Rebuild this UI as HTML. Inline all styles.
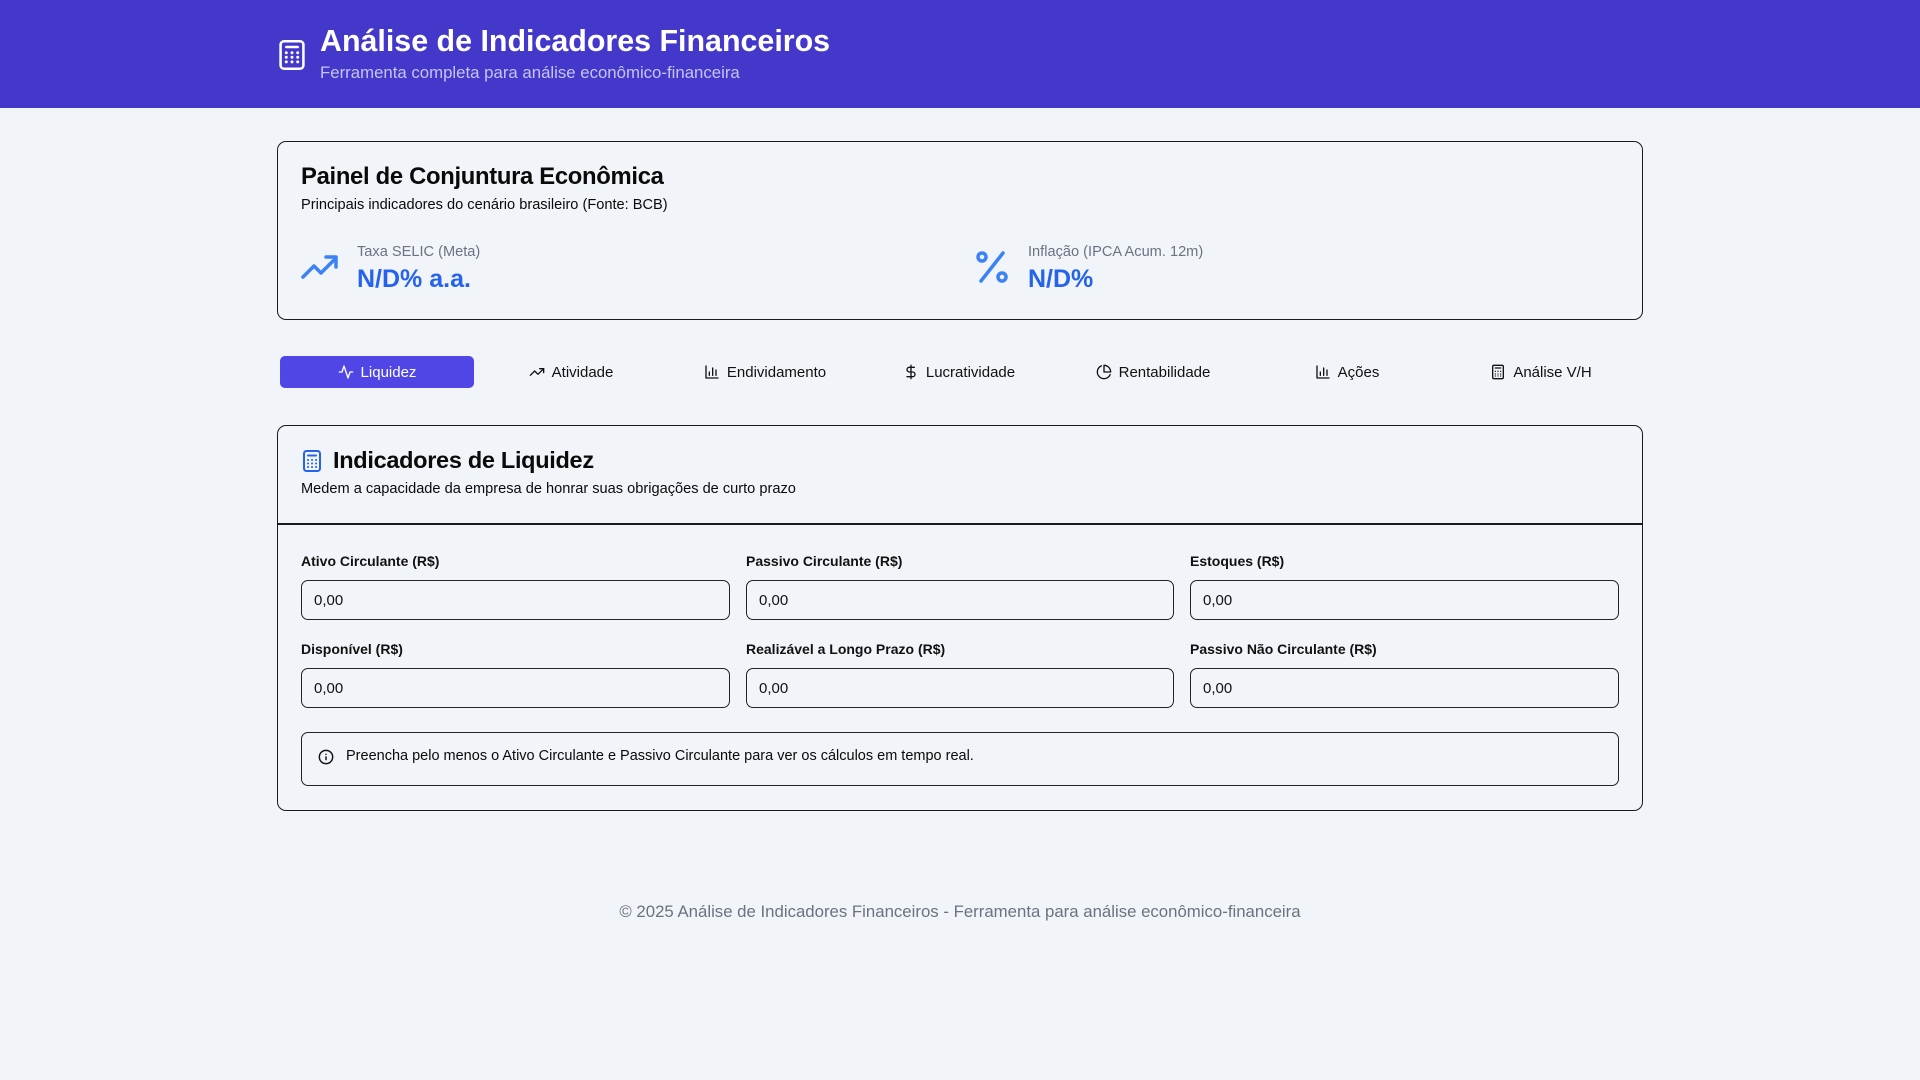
<!DOCTYPE html>
<html><head><meta charset="utf-8"><style>
*{margin:0;padding:0;box-sizing:border-box}
body{width:1920px;height:1080px;background:#f1f4f9;font-family:"Liberation Sans",sans-serif;color:#0a0a0a;position:relative;overflow:hidden}
.a{position:absolute}
.hdr{left:0;top:0;width:1920px;height:108px;background:#4338ca}
.card{border:1.5px solid #1a1a1a;border-radius:9px}
.lbl{font-size:14px;font-weight:bold;color:#111}
.inp{height:40px;border:1.5px solid #222;border-radius:7px;font-size:15px;padding-left:12px;line-height:39px;color:#111}
.tab{top:356px;height:32px;width:194px;display:flex;align-items:center;justify-content:center;gap:7px;font-size:15px;color:#111}
.tab svg{width:16px;height:16px;fill:none;stroke:currentColor;stroke-width:2;stroke-linecap:round;stroke-linejoin:round}
</style></head><body>
<div class="a hdr"></div>
<svg class="a" style="left:278px;top:39px" width="28" height="32" viewBox="0 0 24 28" fill="none" stroke="#fff" stroke-width="2.2" stroke-linecap="round"><rect x="2" y="2" width="20" height="24" rx="3"/><line x1="7" y1="7" x2="17" y2="7"/><path d="M7 12h0M12 12h0M17 12h0M7 16h0M12 16h0M17 16h0M7 20h0M12 20h0M17 20h0" stroke-width="2.6"/></svg>
<div class="a" style="left:320px;top:24px;font-size:30.4px;font-weight:bold;color:#fff">Análise de Indicadores Financeiros</div>
<div class="a" style="left:320px;top:63px;font-size:16.8px;color:#c7c4f5">Ferramenta completa para análise econômico-financeira</div>

<div class="a card" style="left:277px;top:141px;width:1366px;height:179px"></div>
<div class="a" style="left:301px;top:163px;font-size:23.8px;font-weight:bold;letter-spacing:-0.3px">Painel de Conjuntura Econômica</div>
<div class="a" style="left:301px;top:197px;font-size:14.6px">Principais indicadores do cenário brasileiro (Fonte: BCB)</div>
<svg class="a" style="left:301px;top:253px" width="38" height="28" viewBox="0 0 38 28" fill="none" stroke="#3b82f6" stroke-width="3.5" stroke-linecap="round" stroke-linejoin="round"><path d="M2 24 L13 13 L20 20 L35 5"/><path d="M25 4 H35 V14"/></svg>
<div class="a" style="left:357px;top:244px;font-size:14.6px;color:#6b7280">Taxa SELIC (Meta)</div>
<div class="a" style="left:357px;top:265px;font-size:25px;font-weight:bold;color:#2563eb">N/D% a.a.</div>
<svg class="a" style="left:975px;top:249px" width="34" height="36" viewBox="0 0 34 36" fill="none" stroke="#3b82f6" stroke-width="3.5" stroke-linecap="round"><circle cx="7" cy="8" r="4"/><circle cx="27" cy="28" r="4"/><line x1="28" y1="4" x2="6" y2="32"/></svg>
<div class="a" style="left:1028px;top:244px;font-size:14.6px;color:#6b7280">Inflação (IPCA Acum. 12m)</div>
<div class="a" style="left:1028px;top:265px;font-size:25px;font-weight:bold;color:#2563eb">N/D%</div>

<div class="a" style="left:280px;top:356px;width:194px;height:32px;background:#4f46e5;border-radius:5px"></div>
<div class="a tab" style="left:280px;color:#fff"><svg viewBox="0 0 24 24"><path d="M22 12h-4l-3 9L9 3l-3 9H2"/></svg>Liquidez</div>
<div class="a tab" style="left:474px"><svg viewBox="0 0 24 24"><path d="M22 7 13.5 15.5 8.5 10.5 2 17"/><path d="M16 7h6v6"/></svg>Atividade</div>
<div class="a tab" style="left:668px"><svg viewBox="0 0 24 24"><path d="M3 3v18h18"/><path d="M8 17v-5M13 17V6M18 17v-8"/></svg>Endividamento</div>
<div class="a tab" style="left:862px"><svg viewBox="0 0 24 24"><path d="M12 2v20"/><path d="M17 5H9.5a3.5 3.5 0 0 0 0 7h5a3.5 3.5 0 0 1 0 7H6"/></svg>Lucratividade</div>
<div class="a tab" style="left:1056px"><svg viewBox="0 0 24 24"><path d="M21.2 15.9A10 10 0 1 1 8 2.8"/><path d="M22 12A10 10 0 0 0 12 2v10z"/></svg>Rentabilidade</div>
<div class="a tab" style="left:1250px"><svg viewBox="0 0 24 24"><path d="M3 3v18h18"/><path d="M8 17v-5M13 17V6M18 17v-8"/></svg>Ações</div>
<div class="a tab" style="left:1444px"><svg viewBox="0 0 24 24"><rect x="4" y="2" width="16" height="20" rx="2"/><path d="M8 6h8M8 11h.01M12 11h.01M16 11h.01M8 15h.01M12 15h.01M16 15h.01M8 18h.01M12 18h.01M16 18h.01"/></svg>Análise V/H</div>

<div class="a card" style="left:277px;top:425px;width:1366px;height:386px"></div>
<div class="a" style="left:277px;top:523px;width:1366px;height:1.5px;background:#1a1a1a"></div>
<svg class="a" style="left:302px;top:449px" width="20" height="24" viewBox="0 0 20 24" fill="none" stroke="#2563eb" stroke-width="2" stroke-linecap="round"><rect x="2" y="2" width="16" height="20" rx="2.5"/><line x1="6" y1="6.5" x2="14" y2="6.5"/><path d="M6 11h.1M10 11h.1M14 11h.1M6 14.5h.1M10 14.5h.1M14 14.5h.1M6 18h.1M10 18h.1M14 18h.1" stroke-width="2"/></svg>
<div class="a" style="left:333px;top:447px;font-size:23.5px;font-weight:bold;letter-spacing:-0.3px">Indicadores de Liquidez</div>
<div class="a" style="left:301px;top:481px;font-size:14.6px">Medem a capacidade da empresa de honrar suas obrigações de curto prazo</div>

<div class="a lbl" style="left:301px;top:553px">Ativo Circulante (R$)</div>
<div class="a lbl" style="left:746px;top:553px">Passivo Circulante (R$)</div>
<div class="a lbl" style="left:1190px;top:553px">Estoques (R$)</div>
<div class="a inp" style="left:301px;top:580px;width:429px">0,00</div>
<div class="a inp" style="left:746px;top:580px;width:428px">0,00</div>
<div class="a inp" style="left:1190px;top:580px;width:429px">0,00</div>
<div class="a lbl" style="left:301px;top:641px">Disponível (R$)</div>
<div class="a lbl" style="left:746px;top:641px">Realizável a Longo Prazo (R$)</div>
<div class="a lbl" style="left:1190px;top:641px">Passivo Não Circulante (R$)</div>
<div class="a inp" style="left:301px;top:668px;width:429px">0,00</div>
<div class="a inp" style="left:746px;top:668px;width:428px">0,00</div>
<div class="a inp" style="left:1190px;top:668px;width:429px">0,00</div>

<div class="a" style="left:301px;top:732px;width:1318px;height:54px;border:1.5px solid #222;border-radius:7px"></div>
<svg class="a" style="left:318px;top:749px" width="16" height="16" viewBox="0 0 24 24" fill="none" stroke="#111" stroke-width="2.2" stroke-linecap="round"><circle cx="12" cy="12" r="10"/><path d="M12 16v-4M12 8h.01"/></svg>
<div class="a" style="left:346px;top:748px;font-size:14.5px">Preencha pelo menos o Ativo Circulante e Passivo Circulante para ver os cálculos em tempo real.</div>

<div class="a" style="left:0;top:902px;width:1920px;text-align:center;font-size:16.8px;color:#6b7280">© 2025 Análise de Indicadores Financeiros - Ferramenta para análise econômico-financeira</div>
</body></html>
